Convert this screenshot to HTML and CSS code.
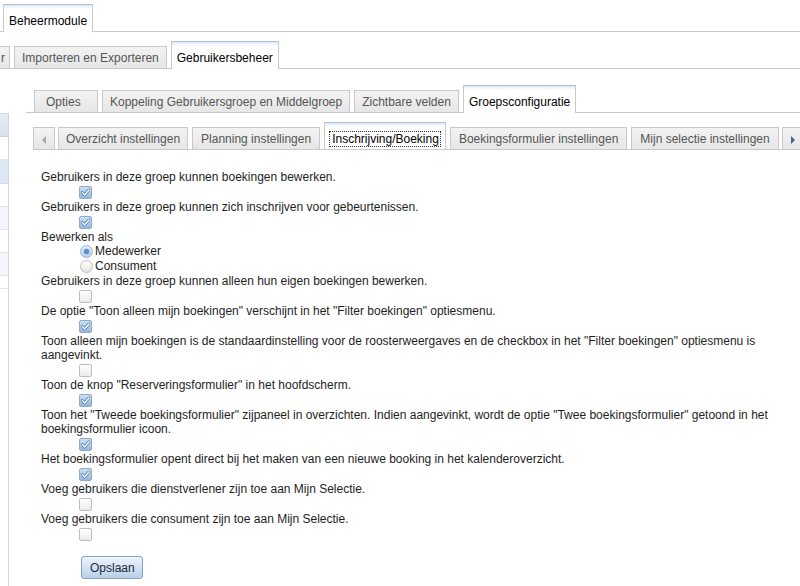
FILE: index.html
```html
<!DOCTYPE html>
<html lang="nl">
<head>
<meta charset="utf-8">
<title>Beheermodule</title>
<link rel="stylesheet" href="styles.css">
</head>
<body>
<div class="page">
  <div class="tabbar tb1">
    <div class="tab sel">Beheermodule</div>
  </div>
  <div class="tabbar tb2">
    <div class="tab cut">r</div>
    <div class="tab">Importeren en Exporteren</div>
    <div class="tab sel">Gebruikersbeheer</div>
  </div>
  <div class="main">
    <div class="side">
      <div class="srow head"></div>
      <div class="srow"></div>
      <div class="srow active"></div>
      <div class="srow"></div>
      <div class="srow alt"></div>
      <div class="srow"></div>
      <div class="srow alt"></div>
      <div class="srow last"></div>
    </div>
    <div class="panel">
      <div class="tabbar tb3">
        <div class="tab opties">Opties</div>
        <div class="tab">Koppeling Gebruikersgroep en Middelgroep</div>
        <div class="tab">Zichtbare velden</div>
        <div class="tab sel">Groepsconfiguratie</div>
      </div>
      <div class="tabbar tb4">
        <div class="scroller left"><span class="arrow-l"></span></div>
        <div class="strip">
          <div class="tab first">Overzicht instellingen</div>
          <div class="tab">Planning instellingen</div>
          <div class="tab sel focus"><span class="focus-text">Inschrijving/Boeking</span></div>
          <div class="tab">Boekingsformulier instellingen</div>
          <div class="tab">Mijn selectie instellingen</div>
        </div>
        <div class="scroller right"><span class="arrow-r"></span></div>
      </div>
      <div class="form">
        <div class="txt">Gebruikers in deze groep kunnen boekingen bewerken.</div>
        <div class="cb on"><svg viewBox="0 0 11 11" width="11" height="11"><path d="M2.3 5.6 L4.6 8 L8.9 2.9" class="ck-o"/><path d="M2.3 5.6 L4.6 8 L8.9 2.9" class="ck-i"/></svg></div>
        <div class="txt">Gebruikers in deze groep kunnen zich inschrijven voor gebeurtenissen.</div>
        <div class="cb on"><svg viewBox="0 0 11 11" width="11" height="11"><path d="M2.3 5.6 L4.6 8 L8.9 2.9" class="ck-o"/><path d="M2.3 5.6 L4.6 8 L8.9 2.9" class="ck-i"/></svg></div>
        <div class="txt">Bewerken als</div>
        <div class="radio"><span class="rb on"><span class="dot"></span></span><span class="rl">Medewerker</span></div>
        <div class="radio"><span class="rb"></span><span class="rl">Consument</span></div>
        <div class="txt">Gebruikers in deze groep kunnen alleen hun eigen boekingen bewerken.</div>
        <div class="cb"></div>
        <div class="txt">De optie "Toon alleen mijn boekingen" verschijnt in het "Filter boekingen" optiesmenu.</div>
        <div class="cb on"><svg viewBox="0 0 11 11" width="11" height="11"><path d="M2.3 5.6 L4.6 8 L8.9 2.9" class="ck-o"/><path d="M2.3 5.6 L4.6 8 L8.9 2.9" class="ck-i"/></svg></div>
        <div class="txt">Toon alleen mijn boekingen is de standaardinstelling voor de roosterweergaves en de checkbox in het "Filter boekingen" optiesmenu is aangevinkt.</div>
        <div class="cb"></div>
        <div class="txt">Toon de knop "Reserveringsformulier" in het hoofdscherm.</div>
        <div class="cb on"><svg viewBox="0 0 11 11" width="11" height="11"><path d="M2.3 5.6 L4.6 8 L8.9 2.9" class="ck-o"/><path d="M2.3 5.6 L4.6 8 L8.9 2.9" class="ck-i"/></svg></div>
        <div class="txt">Toon het "Tweede boekingsformulier" zijpaneel in overzichten. Indien aangevinkt, wordt de optie "Twee boekingsformulier" getoond in het boekingsformulier icoon.</div>
        <div class="cb on"><svg viewBox="0 0 11 11" width="11" height="11"><path d="M2.3 5.6 L4.6 8 L8.9 2.9" class="ck-o"/><path d="M2.3 5.6 L4.6 8 L8.9 2.9" class="ck-i"/></svg></div>
        <div class="txt">Het boekingsformulier opent direct bij het maken van een nieuwe booking in het kalenderoverzicht.</div>
        <div class="cb on"><svg viewBox="0 0 11 11" width="11" height="11"><path d="M2.3 5.6 L4.6 8 L8.9 2.9" class="ck-o"/><path d="M2.3 5.6 L4.6 8 L8.9 2.9" class="ck-i"/></svg></div>
        <div class="txt">Voeg gebruikers die dienstverlener zijn toe aan Mijn Selectie.</div>
        <div class="cb"></div>
        <div class="txt">Voeg gebruikers die consument zijn toe aan Mijn Selectie.</div>
        <div class="cb"></div>
        <button class="btn" type="button">Opslaan</button>
      </div>
    </div>
  </div>
</div>
</body>
</html>
```
FILE: styles.css
```css
html, body {
  margin: 0;
  padding: 0;
  height: 100%;
  overflow: hidden;
  background: #fff;
}
body {
  font-family: "Liberation Sans", Arial, sans-serif;
  font-size: 12px;
  color: #222;
}
.page {
  display: flex;
  flex-direction: column;
  height: 100%;
}
.tabbar {
  display: flex;
  align-items: flex-end;
  gap: 4px;
  box-sizing: border-box;
  border-bottom: 1px solid #c9c9c9;
  flex: none;
}
.tab {
  box-sizing: border-box;
  height: 22px;
  line-height: 15px;
  padding: 4px 7px 2px;
  border: 1px solid #c9c9c9;
  border-bottom: none;
  background: linear-gradient(#f3f3f3, #e6e6e6);
  color: #555;
  white-space: nowrap;
  flex: none;
}
.tab.sel {
  height: 28px;
  padding: 9px 5px 3px;
  margin-bottom: -1px;
  background: linear-gradient(#dfe9f5 0, #fff 4px, #fff 100%);
  border-top-color: #a9c2dc;
  color: #000;
  position: relative;
}
.tb1 {
  height: 32px;
  padding-left: 3px;
}
.tb2 {
  height: 37px;
}
.tab.cut {
  margin-left: -20px;
  padding-left: 20px;
  padding-right: 4px;
}
.main {
  flex: 1;
  display: flex;
  min-height: 0;
}
.side {
  width: 8px;
  margin-top: 44px;
  border-right: 1px solid #d4d4d4;
  flex: none;
}
.srow {
  height: 22px;
  border-bottom: 1px solid #e4e4e4;
  background: #fff;
}
.srow.head {
  border-top: 1px solid #cfd6de;
  background: linear-gradient(#e6edf5, #d7e1ec);
  border-bottom-color: #c9d2dc;
}
.srow.active {
  height: 23px;
  background: #dce8f6;
  border-bottom-color: #d2dfee;
}
.srow.alt {
  background: #f3f7fc;
}
.srow.last {
  height: 12px;
}
.panel {
  flex: 1;
  margin-left: 17px;
  display: flex;
  flex-direction: column;
  min-width: 0;
}
.tb3 {
  height: 44px;
  padding-left: 8px;
}
.tab.opties {
  width: 64px;
  padding-left: 11px;
}
.tb4 {
  height: 37px;
  margin-left: 7px;
  margin-right: -5px;
  gap: 3px;
}
.strip {
  flex: 1;
  display: flex;
  align-items: flex-end;
  gap: 4px;
  overflow: hidden;
  height: 100%;
  min-width: 0;
}
.strip .tab {
  padding-left: 8px;
  padding-right: 8px;
}
.strip .tab.first {
  padding-left: 7px;
  padding-right: 7px;
}
.strip .tab.focus {
  padding-left: 5px;
  padding-right: 5px;
}
.focus-text {
  outline: 1px dotted #333;
  outline-offset: 0;
  padding: 0 1px 0 2px;
}
.scroller {
  box-sizing: border-box;
  width: 22px;
  height: 22px;
  border: 1px solid #c9c9c9;
  border-bottom: none;
  background: linear-gradient(#f3f3f3, #e6e6e6);
  display: flex;
  align-items: center;
  justify-content: center;
  flex: none;
}
.scroller.right {
  width: 23px;
  justify-content: flex-start;
  padding-left: 8px;
}
.arrow-l {
  width: 0;
  height: 0;
  border-top: 4px solid transparent;
  border-bottom: 4px solid transparent;
  border-right: 4px solid #a6a6a6;
  margin-top: 2px;
}
.arrow-r {
  width: 0;
  height: 0;
  border-top: 4px solid transparent;
  border-bottom: 4px solid transparent;
  border-left: 4px solid #3f6596;
  margin-top: 2px;
}
.form {
  padding: 20px 6px 0 15px;
}
.txt {
  line-height: 14px;
  color: #1e1e1e;
}
.cb {
  box-sizing: border-box;
  width: 13px;
  height: 13px;
  margin: 2px 0 1px 38px;
  border: 1px solid #bdbdbd;
  border-radius: 2px;
  background: linear-gradient(#ffffff, #ebebeb);
}
.cb.on {
  border-color: #8eaac8;
  background: linear-gradient(#cfe0f2, #93b7de);
}
.cb svg {
  display: block;
}
.ck-o {
  fill: none;
  stroke: #3d71ab;
  stroke-width: 2.8;
  stroke-linecap: round;
  stroke-linejoin: round;
}
.ck-i {
  fill: none;
  stroke: #fff;
  stroke-width: 1.5;
  stroke-linecap: round;
  stroke-linejoin: round;
}
.radio {
  display: flex;
  align-items: center;
  height: 15px;
  padding-left: 39px;
}
.rb {
  box-sizing: border-box;
  width: 13px;
  height: 13px;
  border-radius: 50%;
  border: 1px solid #bcbcbc;
  background: linear-gradient(#ffffff, #e4e4e4);
  display: flex;
  align-items: center;
  justify-content: center;
  flex: none;
}
.rb.on {
  border-color: #9fb6ce;
  background: linear-gradient(#e4eef9, #b4cee9);
}
.dot {
  width: 5px;
  height: 5px;
  border-radius: 50%;
  background: #5e90c6;
  box-shadow: 0 0 1px #3f72aa;
}
.rl {
  margin-left: 2px;
  line-height: 15px;
}
.btn {
  display: block;
  margin: 15px 0 0 40px;
  box-sizing: border-box;
  width: 62px;
  height: 23px;
  padding: 0 8px;
  font-family: "Liberation Sans", Arial, sans-serif;
  font-size: 12px;
  color: #1f2b38;
  border: 1px solid #8ba2ba;
  border-radius: 3px;
  background: linear-gradient(#edf4fb, #b8d0ea);
}
```
